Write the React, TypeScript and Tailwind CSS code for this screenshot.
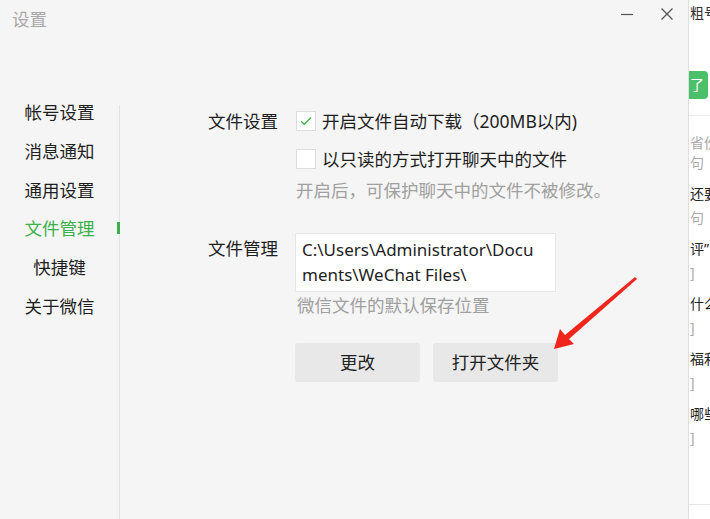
import React from "react";

const font = { fontFamily: '"Noto Sans", "Noto Sans CJK SC", sans-serif' };

const navItems = ["帐号设置", "消息通知", "通用设置", "文件管理", "快捷键", "关于微信"];

function CheckBox({ checked }: { checked?: boolean }) {
  return (
    <span className="flex h-[20px] w-[20px] shrink-0 items-center justify-center border border-[#dcdcdc] bg-white">
      {checked && (
        <svg width="12" height="10" viewBox="0 0 12 10" fill="none">
          <path d="M1 5.2 L4.3 8.3 L11 1.5" stroke="#3cb04a" strokeWidth="1.3" />
        </svg>
      )}
    </span>
  );
}

function SideStrip() {
  // part of the chat window lying behind the settings dialog
  const rows: [string, string][] = [
    ["还要", "句"],
    ["评”", "]"],
    ["什么", "]"],
    ["福利", "]"],
    ["哪些", "]"],
  ];
  return (
    <div className="flex h-full w-[22px] flex-col overflow-hidden whitespace-nowrap border-l border-[#dedede] bg-white pl-[1px] text-[14px] leading-[20px]">
      <div className="mt-[3px] h-[20px] text-[#333]">粗号</div>
      <div className="mt-[48px] -ml-[1px] flex h-[28px] w-[19px] items-center rounded-r-[4px] bg-[#4cbf6a] pl-[1px] text-white">了</div>
      <div className="mt-[16px] -ml-[1px] border-t border-[#ececec]" />
      <div className="mt-[17px] text-[#aaa]">省份</div>
      <div className="text-[#aaa]">句</div>
      {rows.map(([a, b]) => (
        <div key={a} className="flex flex-col">
          <div className="mt-[11px] text-[#222]">{a}</div>
          <div className="mt-[4px] text-[#aaa]">{b}</div>
        </div>
      ))}
      <div className="mt-auto mb-[14px] -ml-[1px] border-t border-[#e6e6e6]" />
    </div>
  );
}

export default function App() {
  return (
    <div className="flex h-[519px] w-[710px] overflow-hidden bg-[#f5f5f5] text-[17.5px] text-[#1e1e1e]" style={font}>
      <div className="relative flex h-full w-[688px] flex-col bg-[#f5f5f5]">
        {/* title bar */}
        <div className="flex h-[93px] shrink-0 items-start justify-between">
          <div className="ml-[12px] mt-[6px] text-[17.5px] text-[#a9a9a9]">设置</div>
          <div className="mr-[14px] mt-[7px] flex items-center gap-[26px]">
            <svg width="14" height="14" viewBox="0 0 14 14">
              <path d="M1 7.5 H13" stroke="#555" strokeWidth="1.2" />
            </svg>
            <svg width="14" height="14" viewBox="0 0 14 14">
              <path d="M1.5 1.5 L12.5 12.5 M12.5 1.5 L1.5 12.5" stroke="#555" strokeWidth="1.3" />
            </svg>
          </div>
        </div>

        <div className="flex flex-1">
          {/* sidebar */}
          <div className="flex h-full">
            <div className="flex w-[119px] flex-col">
              {navItems.map((item) => {
                const active = item === "文件管理";
                return (
                  <div
                    key={item}
                    className={`relative flex h-[38.7px] items-center justify-center ${active ? "text-[#3cb04a]" : "text-[#1e1e1e]"}`}
                  >
                    {item}
                    {active && <span className="absolute right-[-1px] top-[13px] h-[12px] w-[3px] bg-[#3cb04a]" />}
                  </div>
                );
              })}
            </div>
            <div className="mt-[12px] w-px bg-[#e2e2e2]" />
          </div>

          {/* content */}
          <div className="flex flex-col pl-[88px] pt-[9px]">
            <div className="flex">
              <div className="w-[88px] shrink-0 leading-[38px]">文件设置</div>
              <div className="flex flex-col">
                <div className="flex h-[38px] items-center gap-[6px]">
                  <CheckBox checked />
                  <span>开启文件自动下载（200MB以内)</span>
                </div>
                <div className="flex h-[38px] items-center gap-[6px]">
                  <CheckBox />
                  <span>以只读的方式打开聊天中的文件</span>
                </div>
                <div className="h-[24px] leading-[24px] text-[#a0a0a0]">开启后，可保护聊天中的文件不被修改。</div>
              </div>
            </div>

            <div className="mt-[31px] flex">
              <div className="w-[87px] shrink-0 pt-[3px] leading-[25px]">文件管理</div>
              <div className="flex flex-col">
                <div className="h-[59px] w-[261px] border border-[#e6e6e6] bg-white px-[6px] pt-[3px] text-[17px] leading-[25px] break-all">
                  C:\Users\Administrator\Documents\WeChat Files\
                </div>
                <div className="ml-[2px] h-[26px] leading-[26px] text-[#a0a0a0]">微信文件的默认保存位置</div>
                <div className="mt-[25px] flex gap-[13px]">
                  <button className="h-[39px] w-[125px] rounded-[3px] bg-[#e8e8e8] text-[#222]">更改</button>
                  <button className="h-[39px] w-[125px] rounded-[3px] bg-[#e8e8e8] text-[#222]">打开文件夹</button>
                </div>
              </div>
            </div>
          </div>
        </div>

        {/* red annotation arrow */}
        <svg className="pointer-events-none absolute left-0 top-0" width="688" height="519">
          <polygon
            points="554,349 560,329 565,335 635,277 637,279 569,339 574,344"
            fill="#f0261c"
          />
        </svg>
      </div>
      <SideStrip />
    </div>
  );
}
